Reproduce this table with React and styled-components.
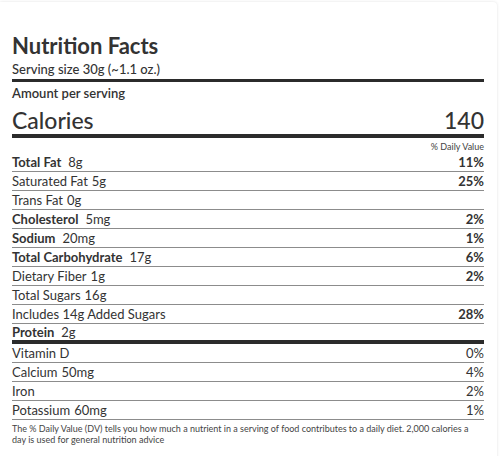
import React from 'react'
import styled, { createGlobalStyle } from 'styled-components'

const GlobalStyle = createGlobalStyle`
body {
  margin: 0;
  background: #ffffff;
  font-family: Lato, "Open Sans", sans-serif;
  color: #333333;
}
`

const Card = styled.div`
width: 497px;
margin-top: 2px;
min-height: 470px;
box-sizing: border-box;
padding: 31px 13px 0 12px;
background: #ffffff;
border-radius: 0 4px 4px 0;
box-shadow: 0 0 3px rgba(0, 0, 0, 0.12);
`

const Title = styled.h1`
margin: 0;
font-size: 22px;
line-height: 26px;
font-weight: 700;
color: #333;
`

const Serving = styled.div`
margin-top: 2px;
font-size: 13px;
line-height: 17px;
font-weight: 500;
`

const Rule = styled.div`
height: ${p => p.$size}px;
background: #2b2b2b;
margin: ${p => p.$top || 0}px 0 ${p => p.$bottom || 0}px;
`

const Amount = styled.div`
font-size: 13px;
line-height: 17px;
font-weight: 600;
`

const CaloriesRow = styled.div`
display: flex;
justify-content: space-between;
align-items: baseline;
font-size: 23px;
line-height: 27px;
font-weight: 500;
margin-top: 5px;
`

const DvHeader = styled.div`
text-align: right;
font-size: 9px;
line-height: 13px;
padding-top: 2px;
color: #444;
`

const Row = styled.div`
display: flex;
justify-content: space-between;
align-items: center;
height: ${p => (p.$last ? 16 : 18)}px;
font-size: 13px;
color: #333;
border-bottom: ${p => (p.$last ? 'none' : '1px solid #8c8c8c')};
`

const Label = styled.span`
font-weight: ${p => (p.$bold ? 700 : 400)};
`

const Amt = styled.span`
margin-left: ${p => (p.$spaced ? 7 : 4)}px;
`

const Pct = styled.span`
font-weight: ${p => (p.$bold ? 700 : 400)};
`

const Note = styled.p`
margin: 3px 0 0;
font-size: 9px;
line-height: 11px;
color: #444;
`

const nutrients = [
  { label: 'Total Fat', amount: '8g', pct: '11%', bold: true },
  { label: 'Saturated Fat', amount: '5g', pct: '25%' },
  { label: 'Trans Fat', amount: '0g', pct: '' },
  { label: 'Cholesterol', amount: '5mg', pct: '2%', bold: true },
  { label: 'Sodium', amount: '20mg', pct: '1%', bold: true },
  { label: 'Total Carbohydrate', amount: '17g', pct: '6%', bold: true },
  { label: 'Dietary Fiber', amount: '1g', pct: '2%' },
  { label: 'Total Sugars', amount: '16g', pct: '' },
  { label: 'Includes 14g Added Sugars', amount: '', pct: '28%' },
  { label: 'Protein', amount: '2g', pct: '', bold: true, last: true },
]

const vitamins = [
  { label: 'Vitamin D', amount: '', pct: '0%' },
  { label: 'Calcium', amount: '50mg', pct: '4%' },
  { label: 'Iron', amount: '', pct: '2%' },
  { label: 'Potassium', amount: '60mg', pct: '1%' },
]

export default function App() {
  return (
    <>
      <GlobalStyle />
      <Card>
        <Title>Nutrition Facts</Title>
        <Serving>Serving size 30g (~1.1 oz.)</Serving>
        <Rule $size={3} $top={1} $bottom={3} />
        <Amount>Amount per serving</Amount>
        <CaloriesRow>
          <span>Calories</span>
          <span>140</span>
        </CaloriesRow>
        <Rule $size={4} />
        <DvHeader>% Daily Value</DvHeader>
        {nutrients.map(n => (
          <Row key={n.label} $last={n.last}>
            <span>
              <Label $bold={n.bold}>{n.label}</Label>
              {n.amount && <Amt $spaced={n.bold}>{n.amount}</Amt>}
            </span>
            <Pct $bold>{n.pct}</Pct>
          </Row>
        ))}
        <Rule $size={4} />
        {vitamins.map(v => (
          <Row key={v.label}>
            <span>
              <Label>{v.label}</Label>
              {v.amount && <Amt>{v.amount}</Amt>}
            </span>
            <Pct>{v.pct}</Pct>
          </Row>
        ))}
        <Note>
          The % Daily Value (DV) tells you how much a nutrient in a serving of food contributes to a daily diet. 2,000 calories a day is used for general nutrition advice
        </Note>
      </Card>
    </>
  )
}
